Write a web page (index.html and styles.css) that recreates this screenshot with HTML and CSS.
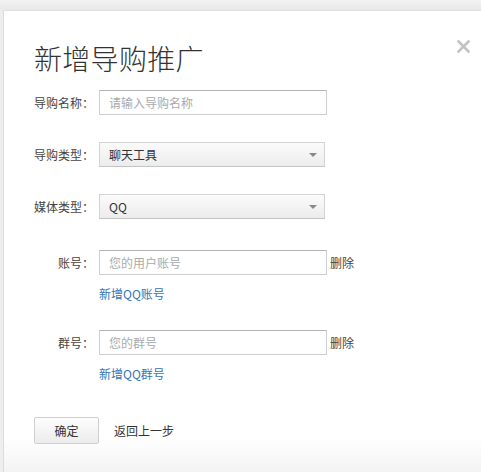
FILE: index.html
```html
<!DOCTYPE html>
<html lang="zh">
<head>
<meta charset="utf-8">
<title>新增导购推广</title>
<link rel="stylesheet" href="styles.css">
</head>
<body>
<div class="dialog">
  <svg class="close" width="13" height="13" viewBox="0 0 13 13"><path d="M1.5 1.5 L11.5 11.5 M11.5 1.5 L1.5 11.5" stroke="#c2c2c2" stroke-width="2.6" stroke-linecap="square"/></svg>
  <h1 class="title">新增导购推广</h1>
  <div class="row r1">
    <span class="label">导购名称：</span>
    <span class="input placeholder">请输入导购名称</span>
  </div>
  <div class="row r2">
    <span class="label">导购类型：</span>
    <span class="select">聊天工具<i class="arrow"></i></span>
  </div>
  <div class="row r3">
    <span class="label">媒体类型：</span>
    <span class="select">QQ<i class="arrow"></i></span>
  </div>
  <div class="row r4">
    <span class="label right">账号：</span>
    <span class="input placeholder">您的用户账号</span>
    <span class="del">删除</span>
  </div>
  <div class="link-row"><a class="link">新增QQ账号</a></div>
  <div class="row r5">
    <span class="label right">群号：</span>
    <span class="input placeholder">您的群号</span>
    <span class="del">删除</span>
  </div>
  <div class="link-row"><a class="link">新增QQ群号</a></div>
  <div class="actions">
    <span class="btn">确定</span>
    <span class="back">返回上一步</span>
  </div>
</div>
</body>
</html>
```

FILE: styles.css
```css
html, body {
  margin: 0;
  height: 100%;
}
body {
  background: linear-gradient(#f2f2f2, #e8e8e8 10px, #eeeeee 10px);
  font-family: "Microsoft YaHei", "Noto Sans CJK SC", sans-serif;
  font-size: 12px;
  color: #333;
  overflow: hidden;
}
.dialog {
  position: relative;
  margin: 10px 0 0 3px;
  height: 462px;
  box-sizing: border-box;
  padding: 30px 0 0 30px;
  background: linear-gradient(#ffffff 0, #ffffff 425px, #f3f3f3 462px);
  border-left: 1px solid #dcdcdc;
  border-top: 1px solid #e0e0e0;
  display: flex;
  flex-direction: column;
  align-items: flex-start;
}
.close {
  position: absolute;
  right: 11px;
  top: 29px;
}
.title {
  margin: 0;
  font-size: 28px;
  font-weight: 300;
  line-height: 34px;
  color: #333;
  letter-spacing: 0.3px;
}
.row {
  display: flex;
  align-items: center;
  height: 25px;
}
.r1 { margin-top: 15px; }
.r2 { margin-top: 27px; }
.r3 { margin-top: 27px; }
.r4 { margin-top: 31px; }
.r5 { margin-top: 27px; }
.label {
  width: 65px;
  color: #444;
  flex: none;
}
.label.right {
  text-align: right;
  box-sizing: border-box;
  padding-right: 5px;
}
.input {
  box-sizing: border-box;
  width: 228px;
  height: 25px;
  border: 1px solid #cfcfcf;
  border-top-color: #b5b5b5;
  padding-left: 9px;
  line-height: 23px;
  background: #fff;
}
.placeholder { color: #aaa; }
.select {
  position: relative;
  box-sizing: border-box;
  width: 226px;
  height: 25px;
  border: 1px solid #d4d4d4;
  border-bottom-color: #c4c4c4;
  padding-left: 9px;
  line-height: 23px;
  background: linear-gradient(#fbfbfb, #ececec);
  color: #333;
}
.arrow {
  position: absolute;
  right: 7px;
  top: 10px;
  width: 0;
  height: 0;
  border-left: 4px solid transparent;
  border-right: 4px solid transparent;
  border-top: 4px solid #888;
}
.del {
  margin-left: 3px;
  color: #444;
}
.link-row {
  margin-top: 10px;
  margin-left: 65px;
  height: 18px;
  line-height: 18px;
}
.link {
  color: #3575b8;
  text-decoration: none;
}
.actions {
  margin-top: 34px;
  display: flex;
  align-items: center;
}
.btn {
  box-sizing: border-box;
  width: 65px;
  height: 27px;
  line-height: 25px;
  text-align: center;
  border: 1px solid #cfcfcf;
  border-radius: 2px;
  background: linear-gradient(#fdfdfd, #ececec);
  color: #333;
}
.back {
  margin-left: 15px;
  color: #333;
}
```
